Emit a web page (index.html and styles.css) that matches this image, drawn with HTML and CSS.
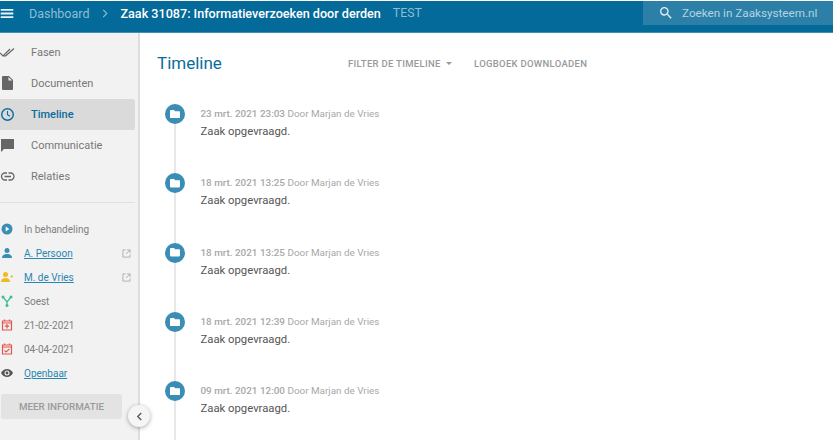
FILE: index.html
```html
<!DOCTYPE html>
<html lang="en">
<head>
    <meta charset="UTF-8">
    <meta name="viewport" content="width=device-width, initial-scale=1.0">
    <title>Zaak 31087 - Timeline</title>
    <link rel="stylesheet" href="styles.css">
</head>
<body>
    <header class="topbar">
        <svg class="menu-icon" viewBox="0 0 14 10"><path d="M0 0h14v2H0zM0 4h14v2H0zM0 8h14v2H0z"/></svg>
        <span class="crumb">Dashboard</span>
        <svg class="crumb-sep" viewBox="0 0 6 10"><path d="M1 1l4 4-4 4" fill="none" stroke="currentColor" stroke-width="1.2"/></svg>
        <span class="case-title">Zaak 31087: Informatieverzoeken door derden</span>
        <span class="env">TEST</span>
        <div class="search">
            <svg class="search-icon" viewBox="0 0 24 24"><path d="M15.500 14h-.79l-.28-.27A6.470 6.470 0 0 0 16 9.500 6.500 6.500 0 1 0 9.500 16c1.610 0 3.090-.59 4.230-1.570l.27.280v.79l5 4.990L20.490 19l-4.990-5zm-6 0C7.010 14 5 11.990 5 9.500S7.010 5 9.500 5 14 7.010 14 9.500 11.990 14 9.500 14z"/></svg>
            <span>Zoeken in Zaaksysteem.nl</span>
        </div>
    </header>

    <div class="layout">
        <aside class="sidebar">
            <nav class="nav">
                <a class="nav-item">
                    <svg class="nav-icon" viewBox="0 0 16 16"><path d="M0 8l3 3 7-7M5.500 11L14 3.500M3 11l2.500 0" fill="none" stroke="#666" stroke-width="1.200"/></svg>
                    Fasen
                </a>
                <a class="nav-item">
                    <svg class="nav-icon" viewBox="0 0 16 16"><path d="M3 0h6l4 4v9a1 1 0 0 1-1 1H3a1 1 0 0 1-1-1V1a1 1 0 0 1 1-1zM8.500 1v3.500H12z" fill="#666" fill-rule="evenodd"/></svg>
                    Documenten
                </a>
                <a class="nav-item active">
                    <svg class="nav-icon" viewBox="0 0 16 16"><circle cx="7.500" cy="7.500" r="5.800" fill="none" stroke="#0a6c9b" stroke-width="1.400"/><path d="M7.500 4v3.800l2.500 1.500" fill="none" stroke="#0a6c9b" stroke-width="1.100"/></svg>
                    Timeline
                </a>
                <a class="nav-item">
                    <svg class="nav-icon" viewBox="0 0 16 16"><path d="M1 1h13v10H4l-3 3z" fill="#666"/></svg>
                    Communicatie
                </a>
                <a class="nav-item">
                    <svg class="nav-icon" viewBox="0 0 16 16"><path d="M7 4H5a3.500 3.500 0 0 0 0 7h2M8.500 4h2a3.500 3.500 0 0 1 0 7h-2M4.500 7.500h6.500" fill="none" stroke="#666" stroke-width="1.300"/></svg>
                    Relaties
                </a>
            </nav>

            <ul class="details">
                <li>
                    <svg class="detail-icon" viewBox="0 0 12 12"><circle cx="6" cy="6" r="5.500" fill="#3a8db5"/><path d="M4.700 3.500l3.600 2.500-3.600 2.500z" fill="#fff"/></svg>
                    <span>In behandeling</span>
                </li>
                <li>
                    <svg class="detail-icon" viewBox="0 0 12 12"><circle cx="6" cy="3.500" r="2.500" fill="#3a8db5"/><path d="M1 11c0-3 2.500-4 5-4s5 1 5 4z" fill="#3a8db5"/></svg>
                    <a class="link">A. Persoon</a>
                    <svg class="ext-icon" viewBox="0 0 10 10"><path d="M4 1H1v8h8V6M5.500 1H9v3.500M9 1L4.500 5.500" fill="none" stroke="#aaa" stroke-width="1"/></svg>
                </li>
                <li>
                    <svg class="detail-icon" viewBox="0 0 12 12"><circle cx="4.500" cy="3.500" r="2.500" fill="#eebb22"/><path d="M0 11c0-3 2-4 4.500-4s4.500 1 4.500 4z" fill="#eebb22"/><path d="M9.500 5.500h2.500M10.750 4.250v2.500" stroke="#eebb22" stroke-width="1"/></svg>
                    <a class="link">M. de Vries</a>
                    <svg class="ext-icon" viewBox="0 0 10 10"><path d="M4 1H1v8h8V6M5.500 1H9v3.500M9 1L4.500 5.500" fill="none" stroke="#aaa" stroke-width="1"/></svg>
                </li>
                <li>
                    <svg class="detail-icon" viewBox="0 0 12 12"><path d="M2 2l4 5 4-5M6 7v4" fill="none" stroke="#3cc08c" stroke-width="1.300"/><circle cx="2" cy="2" r="1.500" fill="#3cc08c"/><circle cx="10" cy="2" r="1.500" fill="#3cc08c"/><circle cx="6" cy="10.500" r="1.500" fill="#3cc08c"/></svg>
                    <span>Soest</span>
                </li>
                <li>
                    <svg class="detail-icon" viewBox="0 0 12 12"><path d="M1.500 2h9v9h-9zM3.500 .500v2M8.500 .500v2M1.500 4h9" fill="none" stroke="#e2574c" stroke-width="1.200"/><path d="M6 5v4.500M3.800 7.200h4.400" stroke="#e2574c" stroke-width="1.200"/></svg>
                    <span>21-02-2021</span>
                </li>
                <li>
                    <svg class="detail-icon" viewBox="0 0 12 12"><path d="M1.500 2h9v9h-9zM3.500 .500v2M8.500 .500v2M1.500 4h9" fill="none" stroke="#e2574c" stroke-width="1.200"/><path d="M3.500 7.500l1.500 1.500 3.500-3" fill="none" stroke="#e2574c" stroke-width="1.100"/></svg>
                    <span>04-04-2021</span>
                </li>
                <li>
                    <svg class="detail-icon" viewBox="0 0 12 12"><path d="M0 6c1.500-2.500 3.500-4 6-4s4.500 1.500 6 4c-1.500 2.500-3.500 4-6 4S1.500 8.500 0 6z" fill="#555"/><circle cx="6" cy="6" r="2.500" fill="#f2f2f2"/><circle cx="6" cy="6" r="1.400" fill="#555"/></svg>
                    <a class="link">Openbaar</a>
                </li>
            </ul>

            <button class="more-btn">MEER INFORMATIE</button>
            <div class="collapse">
                <svg viewBox="0 0 8 10"><path d="M6 1L2 5l4 4" fill="none" stroke="#555" stroke-width="1.500"/></svg>
            </div>
        </aside>

        <main class="main">
            <div class="main-head">
                <h1>Timeline</h1>
                <a class="action filter">FILTER DE TIMELINE <i class="caret"></i></a>
                <a class="action">LOGBOEK DOWNLOADEN</a>
            </div>

            <ol class="timeline">
                <li class="event">
                    <span class="dot"><svg viewBox="0 0 12 10"><path d="M1 0h4l1 1.300h5a1 1 0 0 1 1 1V9a1 1 0 0 1-1 1H1a1 1 0 0 1-1-1V1a1 1 0 0 1 1-1z"/></svg></span>
                    <div class="event-body">
                        <p class="meta"><b>23 mrt. 2021 23:03</b> Door Marjan de Vries</p>
                        <p class="text">Zaak opgevraagd.</p>
                    </div>
                </li>
                <li class="event">
                    <span class="dot"><svg viewBox="0 0 12 10"><path d="M1 0h4l1 1.300h5a1 1 0 0 1 1 1V9a1 1 0 0 1-1 1H1a1 1 0 0 1-1-1V1a1 1 0 0 1 1-1z"/></svg></span>
                    <div class="event-body">
                        <p class="meta"><b>18 mrt. 2021 13:25</b> Door Marjan de Vries</p>
                        <p class="text">Zaak opgevraagd.</p>
                    </div>
                </li>
                <li class="event">
                    <span class="dot"><svg viewBox="0 0 12 10"><path d="M1 0h4l1 1.300h5a1 1 0 0 1 1 1V9a1 1 0 0 1-1 1H1a1 1 0 0 1-1-1V1a1 1 0 0 1 1-1z"/></svg></span>
                    <div class="event-body">
                        <p class="meta"><b>18 mrt. 2021 13:25</b> Door Marjan de Vries</p>
                        <p class="text">Zaak opgevraagd.</p>
                    </div>
                </li>
                <li class="event">
                    <span class="dot"><svg viewBox="0 0 12 10"><path d="M1 0h4l1 1.300h5a1 1 0 0 1 1 1V9a1 1 0 0 1-1 1H1a1 1 0 0 1-1-1V1a1 1 0 0 1 1-1z"/></svg></span>
                    <div class="event-body">
                        <p class="meta"><b>18 mrt. 2021 12:39</b> Door Marjan de Vries</p>
                        <p class="text">Zaak opgevraagd.</p>
                    </div>
                </li>
                <li class="event">
                    <span class="dot"><svg viewBox="0 0 12 10"><path d="M1 0h4l1 1.300h5a1 1 0 0 1 1 1V9a1 1 0 0 1-1 1H1a1 1 0 0 1-1-1V1a1 1 0 0 1 1-1z"/></svg></span>
                    <div class="event-body">
                        <p class="meta"><b>09 mrt. 2021 12:00</b> Door Marjan de Vries</p>
                        <p class="text">Zaak opgevraagd.</p>
                    </div>
                </li>
            </ol>
        </main>
    </div>
</body>
</html>
```

FILE: styles.css
```css
/* General */
html, body {
    height: 100%;
}
body {
    margin: 0;
    overflow: hidden;
    font-family: Roboto, sans-serif;
    color: #555;
    background-color: #fff;
    display: flex;
    flex-direction: column;
}

/* Top bar */
.topbar {
    flex: none;
    height: 24px;
    margin-top: 1px;
    padding-bottom: 7px;
    display: flex;
    align-items: center;
    background-color: #036a9a;
    border-bottom: 1px solid #3d8fb4;
    color: #fff;
    font-size: 12.600px;
    white-space: nowrap;
}
.menu-icon {
    width: 14px;
    height: 9px;
    fill: #e8f2f7;
    margin-right: 15px;
}
.crumb {
    color: #8fbdd4;
    font-size: 12.500px;
}
.crumb-sep {
    width: 6px;
    height: 9px;
    color: #8fbdd4;
    margin: 0 12px 0 13px;
}
.case-title {
    font-weight: 500;
}
.env {
    color: #8fbdd4;
    font-size: 12.300px;
    margin-left: 12px;
}
.search {
    margin-left: auto;
    width: 190px;
    height: 24px;
    background-color: #2c80a8;
    display: flex;
    align-items: center;
    color: #b4d3e2;
    font-size: 11.700px;
}
.search-icon {
    width: 16px;
    height: 16px;
    fill: #e4eff5;
    margin: 0 8px 0 15px;
}

/* Layout */
.layout {
    flex: 1;
    display: flex;
    min-height: 0;
}

/* Sidebar */
.sidebar {
    position: relative;
    flex: none;
    width: 138px;
    background-color: #f2f2f2;
    border-right: 2px solid #dedede;
}
.nav {
    margin-right: 3px;
    padding-top: 4px;
    padding-bottom: 10px;
    border-bottom: 1px solid #e0e0e0;
    margin-bottom: 14px;
}
.nav-item {
    height: 31px;
    display: flex;
    align-items: center;
    font-size: 11px;
    color: #777;
}
.nav-item.active {
    background-color: #dadada;
    border-radius: 0 2px 2px 0;
    color: #0a6c9b;
    font-weight: 500;
}
.nav-icon {
    flex: none;
    width: 16px;
    height: 16px;
    margin-right: 15px;
}
.details {
    list-style: none;
    margin: 0;
    padding: 0;
}
.details li {
    height: 24px;
    display: flex;
    align-items: center;
    font-size: 10px;
    color: #808080;
}
.detail-icon {
    flex: none;
    width: 12px;
    height: 12px;
    margin: 0 11px 0 1px;
}
.link {
    color: #2a86b0;
    text-decoration: underline;
}
.ext-icon {
    width: 9px;
    height: 9px;
    margin-left: auto;
    margin-right: 7px;
}
.more-btn {
    display: block;
    width: 121px;
    height: 25px;
    margin: 9px 0 0 1px;
    padding: 0;
    border: none;
    border-radius: 2px;
    background-color: #e3e3e3;
    color: #9a9a9a;
    font-family: Roboto, sans-serif;
    font-size: 9.800px;
    font-weight: 500;
}
.collapse {
    position: absolute;
    left: 128px;
    top: 372px;
    width: 22px;
    height: 22px;
    border-radius: 50%;
    background-color: #f5f5f5;
    box-shadow: 0 1px 4px rgba(0, 0, 0, 0.35);
    display: flex;
    align-items: center;
    justify-content: center;
}
.collapse svg {
    width: 7px;
    height: 9px;
}

/* Main */
.main {
    flex: 1;
    min-width: 0;
}
.main-head {
    display: flex;
    align-items: center;
    height: 60px;
    padding-left: 17px;
}
.main-head h1 {
    margin: 0;
    width: 191px;
    font-size: 17px;
    font-weight: 400;
    color: #0a6c9b;
}
.action {
    font-size: 9.500px;
    font-weight: 500;
    letter-spacing: 0.3px;
    color: #999;
}
.filter {
    width: 126px;
}
.caret {
    display: inline-block;
    margin: 0 0 2px 3px;
    border-left: 3px solid transparent;
    border-right: 3px solid transparent;
    border-top: 3px solid #999;
}

/* Timeline */
.timeline {
    list-style: none;
    margin: 11px 0 0;
    padding: 0 0 0 25px;
}
.event {
    position: relative;
    display: flex;
    height: 69.250px;
}
.event::before {
    content: "";
    position: absolute;
    left: 9px;
    top: 0;
    bottom: 0;
    width: 2px;
    background-color: #e8e8e8;
}
.dot {
    position: relative;
    flex: none;
    width: 20px;
    height: 20px;
    border-radius: 50%;
    background-color: #3a8db5;
    display: flex;
    align-items: center;
    justify-content: center;
}
.dot svg {
    width: 10px;
    height: 8.500px;
    fill: #fff;
}
.event-body {
    margin-left: 15.500px;
}
.meta {
    margin: 3px 0 0;
    font-size: 9.900px;
    line-height: 14px;
    color: #a8a8a8;
}
.meta b {
    font-weight: 500;
}
.text {
    margin: 3px 0 0;
    font-size: 11.300px;
    line-height: 16px;
    color: #555;
}
```
